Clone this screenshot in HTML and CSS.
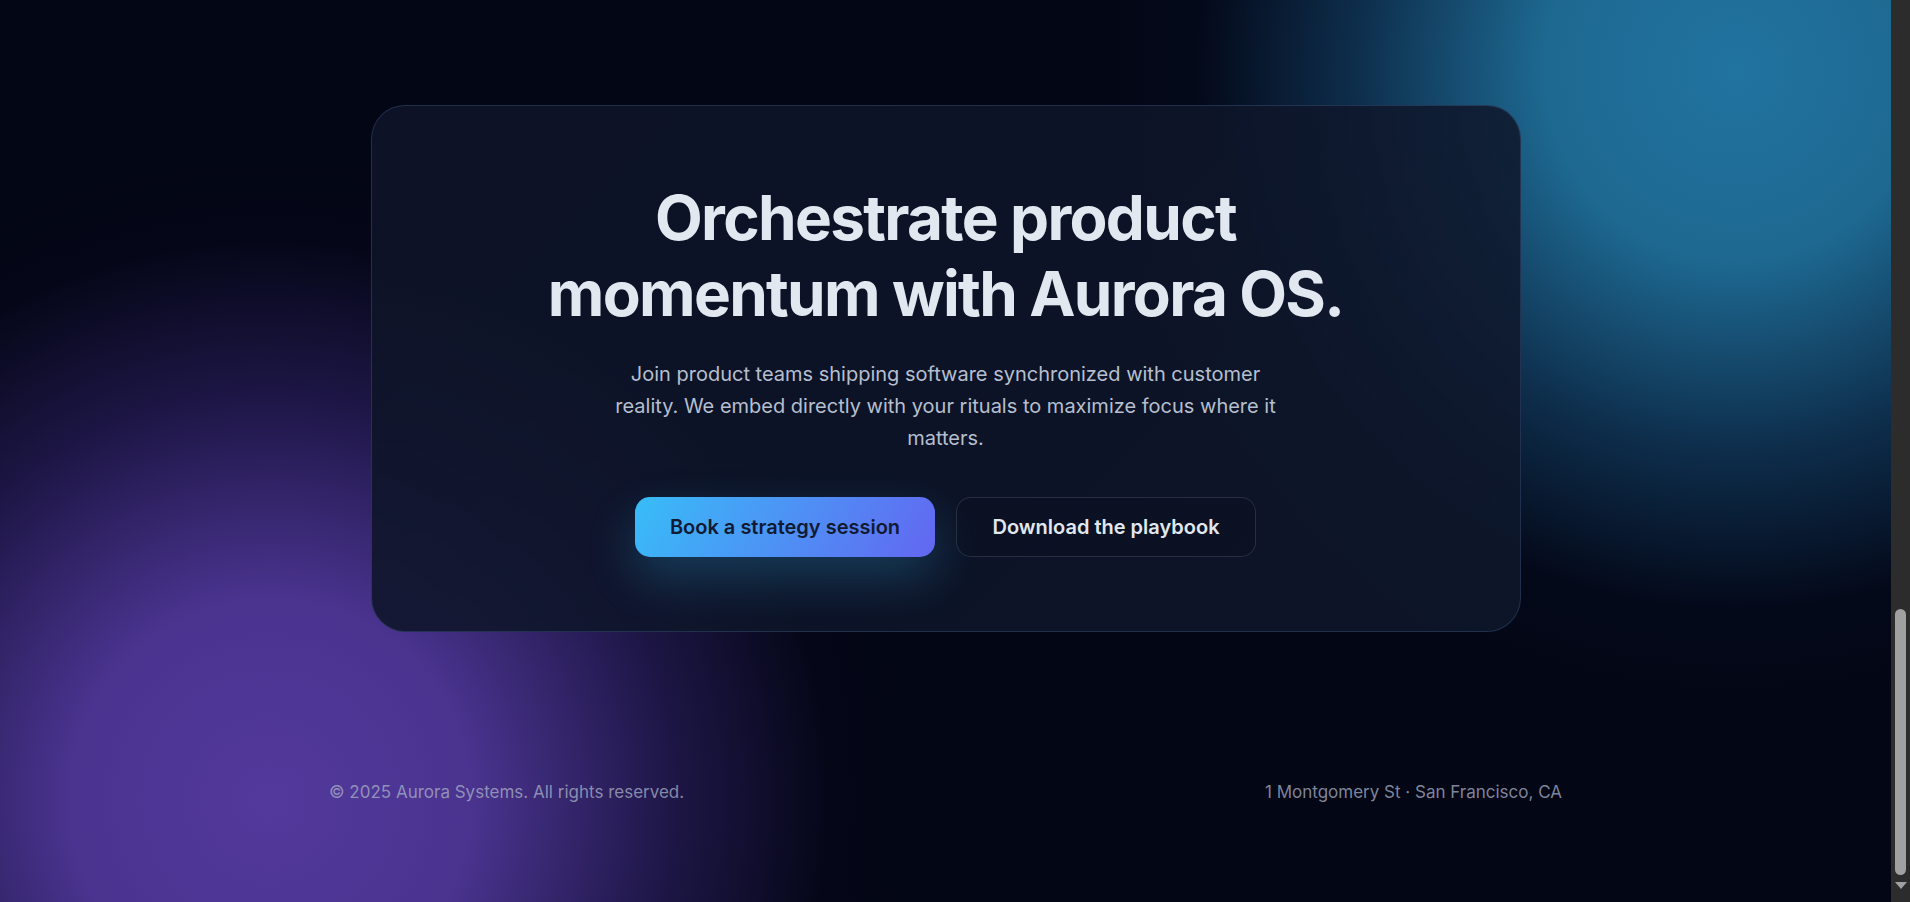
FILE: index.html
```html
<!DOCTYPE html>
<html lang="en">
<head>
<meta charset="utf-8">
<title>Aurora OS</title>
<link rel="stylesheet" href="styles.css">
</head>
<body>
<div class="frame">
  <section class="closing">
    <div class="cta-card">
      <h2 class="cta-title">Orchestrate product momentum with Aurora OS.</h2>
      <p class="cta-text">Join product teams shipping software synchronized with customer reality. We embed directly with your rituals to maximize focus where it matters.</p>
      <div class="cta-actions">
        <a class="btn btn-primary" href="#">Book a strategy session</a>
        <a class="btn btn-ghost" href="#">Download the playbook</a>
      </div>
    </div>
    <footer class="site-footer">
      <span>© 2025 Aurora Systems. All rights reserved.</span>
      <span>1 Montgomery St · San Francisco, CA</span>
    </footer>
  </section>
  <div class="scrollbar" aria-hidden="true">
    <div class="scroll-thumb"></div>
    <div class="scroll-arrow"></div>
  </div>
</div>
</body>
</html>
```
FILE: styles.css
```css
html {
  background: #030615;
}
body {
  margin: 0;
  background: #030615;
  font-family: Inter, "Liberation Sans", sans-serif;
  color: #e2e8f0;
}
.frame {
  display: flex;
  height: 902px;
  overflow: hidden;
}
.closing {
  flex: 1;
  min-width: 0;
  box-sizing: border-box;
  padding-top: 105px;
  display: flex;
  flex-direction: column;
  background:
    radial-gradient(circle at 1735px 70px, rgba(33,115,160,1) 0px, rgba(31,110,152,0.95) 190px, rgba(22,78,120,0.55) 380px, rgba(8,25,50,0.15) 540px, rgba(3,6,21,0) 640px),
    radial-gradient(circle at 270px 800px, rgba(82,57,156,1) 0px, rgba(78,54,150,0.95) 200px, rgba(52,36,112,0.55) 400px, rgba(15,12,40,0.15) 560px, rgba(3,6,21,0) 660px),
    #030615;
}
.cta-card {
  box-sizing: border-box;
  width: 1150px;
  margin: 0 auto;
  padding: 74px 40px 74px;
  border: 1px solid rgba(110,145,210,0.22);
  border-radius: 34px;
  background: linear-gradient(135deg, rgba(14,20,40,0.9), rgba(15,24,44,0.84));
  display: flex;
  flex-direction: column;
  align-items: center;
  text-align: center;
}
.cta-title {
  margin: 0;
  max-width: 820px;
  font-size: 62px;
  line-height: 76px;
  font-weight: 700;
  letter-spacing: -0.027em;
  color: #e2e8f0;
}
.cta-text {
  margin: 26px 0 0;
  max-width: 672px;
  font-size: 20px;
  line-height: 32px;
  color: #b6bfce;
}
.cta-actions {
  margin-top: 43px;
  display: flex;
  gap: 21px;
}
.btn {
  box-sizing: border-box;
  height: 60px;
  width: 300px;
  display: flex;
  align-items: center;
  justify-content: center;
  border-radius: 15px;
  font-size: 20px;
  font-weight: 600;
  text-decoration: none;
}
.btn-primary {
  background: linear-gradient(120deg, #38bdf8, #6366f1);
  color: #101a33;
  box-shadow: 0 20px 48px rgba(56,189,248,0.24);
}
.btn-ghost {
  border: 1px solid rgba(148,163,184,0.2);
  background: rgba(10,15,32,0.5);
  color: #e2e8f0;
}
.site-footer {
  box-sizing: border-box;
  width: 1233px;
  margin: 148px auto 0;
  display: flex;
  justify-content: space-between;
  font-size: 17px;
  line-height: 24px;
  color: rgba(168,176,198,0.76);
}
.scrollbar {
  flex: 0 0 19px;
  background: #2c2c2c;
  display: flex;
  flex-direction: column;
  align-items: center;
}
.scroll-thumb {
  width: 11px;
  height: 266px;
  margin-top: 609px;
  border-radius: 6px;
  background: #a0a0a0;
}
.scroll-arrow {
  margin-top: 7px;
  width: 0;
  height: 0;
  border-left: 6px solid transparent;
  border-right: 6px solid transparent;
  border-top: 7px solid #a0a0a0;
}
```
